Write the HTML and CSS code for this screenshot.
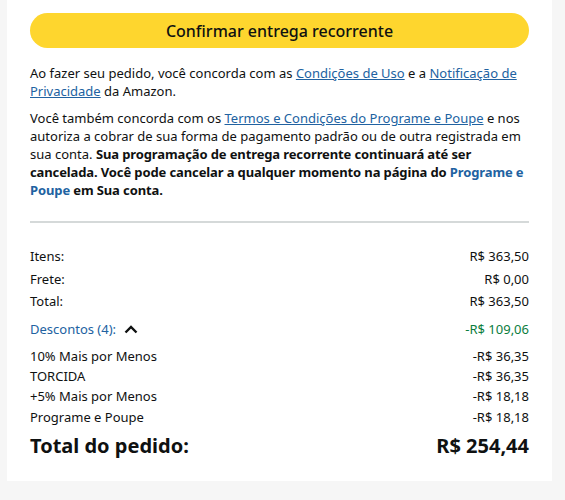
FILE: index.html
```html
<!DOCTYPE html>
<html lang="pt-BR">
<head>
    <meta charset="UTF-8">
    <meta name="viewport" content="width=device-width, initial-scale=1.0">
    <title>Confirmar entrega recorrente</title>
    <link rel="stylesheet" href="styles.css">
</head>
<body>
    <div class="card">
        <button class="btn-confirm">Confirmar entrega recorrente</button>

        <p class="legal">Ao fazer seu pedido, você concorda com as <a href="#">Condições de Uso</a> e a <a href="#">Notificação de Privacidade</a> da Amazon.</p>

        <p class="legal">Você também concorda com os <a href="#">Termos e Condições do Programe e Poupe</a> e nos autoriza a cobrar de sua forma de pagamento padrão ou de outra registrada em sua conta. <b>Sua programação de entrega recorrente continuará até ser cancelada. Você pode cancelar a qualquer momento na página do <a href="#" class="plain-link">Programe e Poupe</a> em Sua conta.</b></p>

        <hr class="divider">

        <div class="summary">
            <div class="row"><span>Itens:</span><span>R$ 363,50</span></div>
            <div class="row"><span>Frete:</span><span>R$ 0,00</span></div>
            <div class="row"><span>Total:</span><span>R$ 363,50</span></div>
            <div class="row discounts">
                <span class="toggle">Descontos (4):
                    <svg width="14" height="10" viewBox="0 0 14 10"><path d="M1.5 8.5 L7 3 L12.5 8.5" fill="none" stroke="#0f1111" stroke-width="2.4"/></svg>
                </span>
                <span class="green">-R$ 109,06</span>
            </div>
            <div class="sub-rows">
                <div class="row sub"><span>10% Mais por Menos</span><span>-R$ 36,35</span></div>
                <div class="row sub"><span>TORCIDA</span><span>-R$ 36,35</span></div>
                <div class="row sub"><span>+5% Mais por Menos</span><span>-R$ 18,18</span></div>
                <div class="row sub"><span>Programe e Poupe</span><span>-R$ 18,18</span></div>
            </div>
            <div class="row grand"><span>Total do pedido:</span><span>R$ 254,44</span></div>
        </div>
    </div>
</body>
</html>
```

FILE: styles.css
```css
body {
    margin: 0;
    background-color: #f6f6f6;
    color: #0f1111;
    font-family: "Noto Sans", Arial, sans-serif;
    font-size: 13px;
}

.card {
    background-color: #ffffff;
    margin-left: 7px;
    width: 545px;
    box-sizing: border-box;
    padding: 13px 23px 0 23px;
    height: 481px;
}

.btn-confirm {
    display: block;
    width: 100%;
    height: 35px;
    border: none;
    border-radius: 18px;
    background-color: #fed62e;
    color: #0f1111;
    font-family: inherit;
    font-size: 16px;
    font-weight: 500;
    cursor: pointer;
}

.legal {
    margin: 16px 0 0 0;
    line-height: 18px;
}

.legal + .legal {
    margin-top: 9px;
}

.legal b {
    letter-spacing: -0.12px;
}

.legal a {
    color: #2162a1;
    text-decoration: underline;
}

.legal a.plain-link {
    text-decoration: none;
}

.divider {
    border: none;
    height: 2px;
    background-color: #d5d9d9;
    margin: 22px 0 0 0;
}

.summary {
    padding-top: 22px;
}

.row {
    display: flex;
    justify-content: space-between;
    align-items: center;
    height: 22.5px;
}

.discounts {
    height: 33px;
}

.toggle {
    color: #2162a1;
    display: flex;
    align-items: center;
    gap: 8px;
}

.green {
    color: #0b7d3e;
}

.sub {
    height: 20.3px;
}

.grand {
    height: 38px;
    font-size: 20px;
    font-weight: bold;
}
```
